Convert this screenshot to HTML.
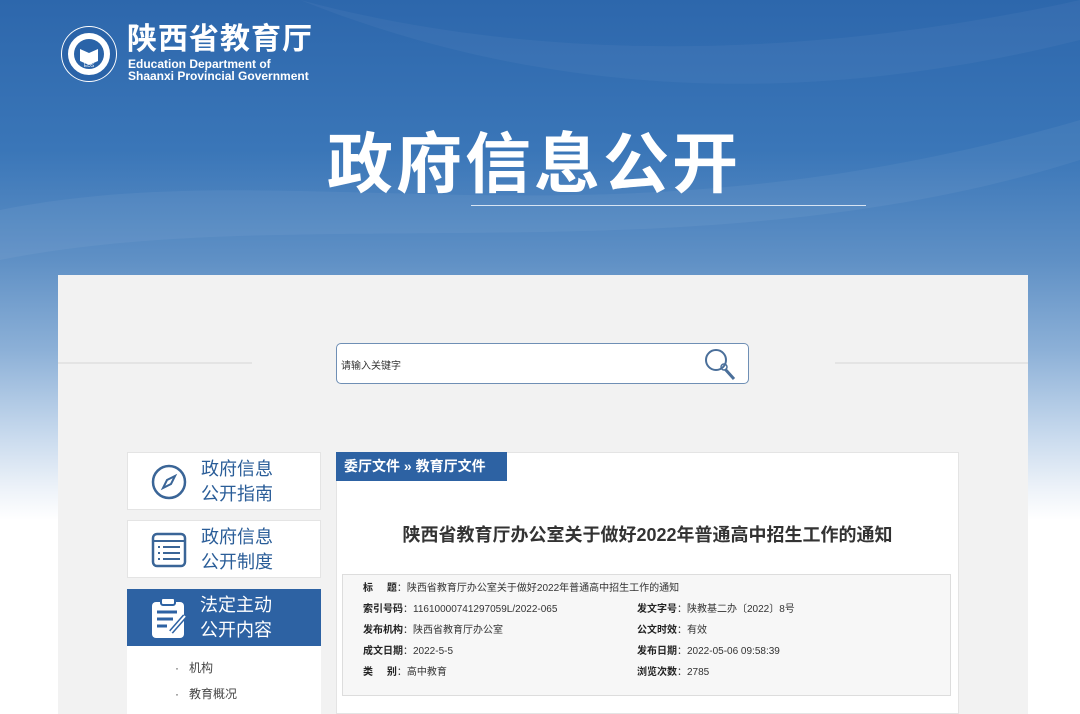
<!DOCTYPE html>
<html><head><meta charset="utf-8"><style>
*{margin:0;padding:0;box-sizing:border-box}
body{width:1080px;height:714px;overflow:hidden;position:relative;font-family:"Liberation Sans","Noto Sans CJK SC",sans-serif;background:linear-gradient(180deg,#2d67ac 0px,#3a76b8 150px,#5f90c5 260px,#8cb0d7 350px,#c4d7ec 430px,#eef3f9 490px,#fff 520px)}
.wave{position:absolute;left:0;top:0;width:1080px;height:300px}
.abs{position:absolute}
.white{color:#fff}
.panel{position:absolute;left:58px;top:275px;width:970px;height:439px;background:#f2f2f2}
.card{position:absolute;background:#fff;border:1px solid #e4e4e4}
.nav{left:127px;width:194px;height:58px}
.nav .t{position:absolute;left:73px;top:4px;font-size:18px;line-height:25px;color:#2a5d98}
.info div{position:absolute;font-size:10px;color:#333}
.info b{font-weight:bold;color:#222}
</style></head><body>
<svg class="wave" viewBox="0 0 1080 300"><path d="M0 210 C300 150 600 260 1080 120 L1080 160 C700 280 300 200 0 260Z" fill="#fff" opacity=".05"/><path d="M300 0 C600 80 900 40 1080 0 L1080 40 C880 90 600 120 300 0Z" fill="#fff" opacity=".04"/></svg>
<svg class="abs" style="left:60px;top:25px" width="58" height="58" viewBox="0 0 58 58"><circle cx="29" cy="29" r="28" fill="#fff"/><circle cx="29" cy="29" r="24" fill="none" stroke="#2a63a8" stroke-width="6"/><circle cx="29" cy="29" r="17" fill="#fff"/><circle cx="29" cy="29" r="15" fill="#2a63a8"/><path d="M20 24 L29 28 L38 24 L38 36 L29 40 L20 36Z" fill="#fff"/><text x="29" y="42" font-size="5" fill="#fff" text-anchor="middle" font-family="Liberation Sans">EDS</text></svg>
<div class="abs white" style="left:127px;top:23px;font-size:30px;line-height:34px;letter-spacing:1px;font-weight:bold">陕西省教育厅</div>
<div class="abs white" style="left:128px;top:58px;font-size:12px;line-height:12px;font-weight:bold">Education Department of<br>Shaanxi Provincial Government</div>
<div class="abs white" style="left:327px;top:128px;font-size:66px;font-weight:bold;line-height:72px;letter-spacing:3px">政府信息公开</div>
<div class="abs" style="left:471px;top:205px;width:395px;height:1px;background:#d7e4f3"></div>
<div class="panel"></div>
<div class="abs" style="left:58px;top:362px;width:194px;height:2px;background:#e4e4e4"></div>
<div class="abs" style="left:835px;top:362px;width:193px;height:2px;background:#e4e4e4"></div>
<div class="abs" style="left:336px;top:343px;width:413px;height:41px;background:#fff;border:1px solid #6f8fb5;border-radius:5px"></div>
<div class="abs" style="left:341px;top:357px;font-size:10px;color:#333">请输入关键字</div>
<svg class="abs" style="left:702px;top:346px" width="36" height="36" viewBox="0 0 36 36"><circle cx="14" cy="14" r="10" fill="none" stroke="#4a6f9a" stroke-width="2"/><circle cx="22" cy="21" r="3" fill="none" stroke="#4a6f9a" stroke-width="1.5"/><path d="M23 23 L32 33" stroke="#4a6f9a" stroke-width="3"/></svg>
<div class="card nav" style="top:452px"><svg class="abs" style="left:22px;top:10px" width="38" height="38" viewBox="0 0 38 38"><circle cx="19" cy="19" r="16" fill="none" stroke="#3a6597" stroke-width="2.5"/><path d="M25 13 L21 21 L13 25 L17 17Z" fill="none" stroke="#3a6597" stroke-width="2"/></svg><div class="t">政府信息<br>公开指南</div></div>
<div class="card nav" style="top:520px"><svg class="abs" style="left:22px;top:10px" width="38" height="38" viewBox="0 0 38 38"><rect x="3" y="3" width="32" height="32" rx="4" fill="none" stroke="#3a6597" stroke-width="2.5"/><path d="M3 10 H35 M8 16 H10 M13 16 H30 M8 22 H10 M13 22 H30 M8 28 H10 M13 28 H30" stroke="#3a6597" stroke-width="2"/></svg><div class="t">政府信息<br>公开制度</div></div>
<div class="abs" style="left:127px;top:589px;width:194px;height:57px;background:#2d62a3"><svg class="abs" style="left:24px;top:9px" width="38" height="40" viewBox="0 0 38 40"><rect x="1" y="4" width="32" height="36" rx="4" fill="#fff"/><rect x="10" y="0" width="14" height="7" rx="2" fill="#fff" stroke="#2d62a3" stroke-width="2"/><path d="M6 14 H26 M6 21 H22 M6 28 H16" stroke="#2d62a3" stroke-width="3"/><path d="M20 34 L34 18" stroke="#2d62a3" stroke-width="5"/><path d="M20 34 L34 18" stroke="#fff" stroke-width="2"/></svg><div class="abs white" style="left:73px;top:4px;font-size:18px;line-height:25px">法定主动<br>公开内容</div></div>
<div class="abs" style="left:127px;top:646px;width:194px;height:68px;background:#fff"></div>
<div class="abs" style="left:175px;top:655px;font-size:12px;line-height:26px;color:#444">·&nbsp;&nbsp;&nbsp;机构<br>·&nbsp;&nbsp;&nbsp;教育概况</div>
<div class="card" style="left:336px;top:452px;width:623px;height:262px"></div>
<div class="abs white" style="left:336px;top:452px;width:171px;height:29px;background:#2d62a3;font-size:14px;font-weight:bold;line-height:29px;padding-left:8px">委厅文件 » 教育厅文件</div>
<div class="abs" style="left:336px;top:521px;width:623px;text-align:center;font-size:18px;font-weight:bold;color:#333">陕西省教育厅办公室关于做好2022年普通高中招生工作的通知</div>
<div class="abs" style="left:342px;top:574px;width:609px;height:122px;background:#f7f7f7;border:1px solid #ddd"></div>
<div class="info">
<div style="left:363px;top:579px"><b>标&nbsp;&nbsp;&nbsp;&nbsp;&nbsp;题</b>：陕西省教育厅办公室关于做好2022年普通高中招生工作的通知</div>
<div style="left:363px;top:600px"><b>索引号码</b>：11610000741297059L/2022-065</div>
<div style="left:363px;top:621px"><b>发布机构</b>：陕西省教育厅办公室</div>
<div style="left:363px;top:642px"><b>成文日期</b>：2022-5-5</div>
<div style="left:363px;top:663px"><b>类&nbsp;&nbsp;&nbsp;&nbsp;&nbsp;别</b>：高中教育</div>
<div style="left:637px;top:600px"><b>发文字号</b>：陕教基二办〔2022〕8号</div>
<div style="left:637px;top:621px"><b>公文时效</b>：有效</div>
<div style="left:637px;top:642px"><b>发布日期</b>：2022-05-06 09:58:39</div>
<div style="left:637px;top:663px"><b>浏览次数</b>：2785</div>
</div>
</body></html>
